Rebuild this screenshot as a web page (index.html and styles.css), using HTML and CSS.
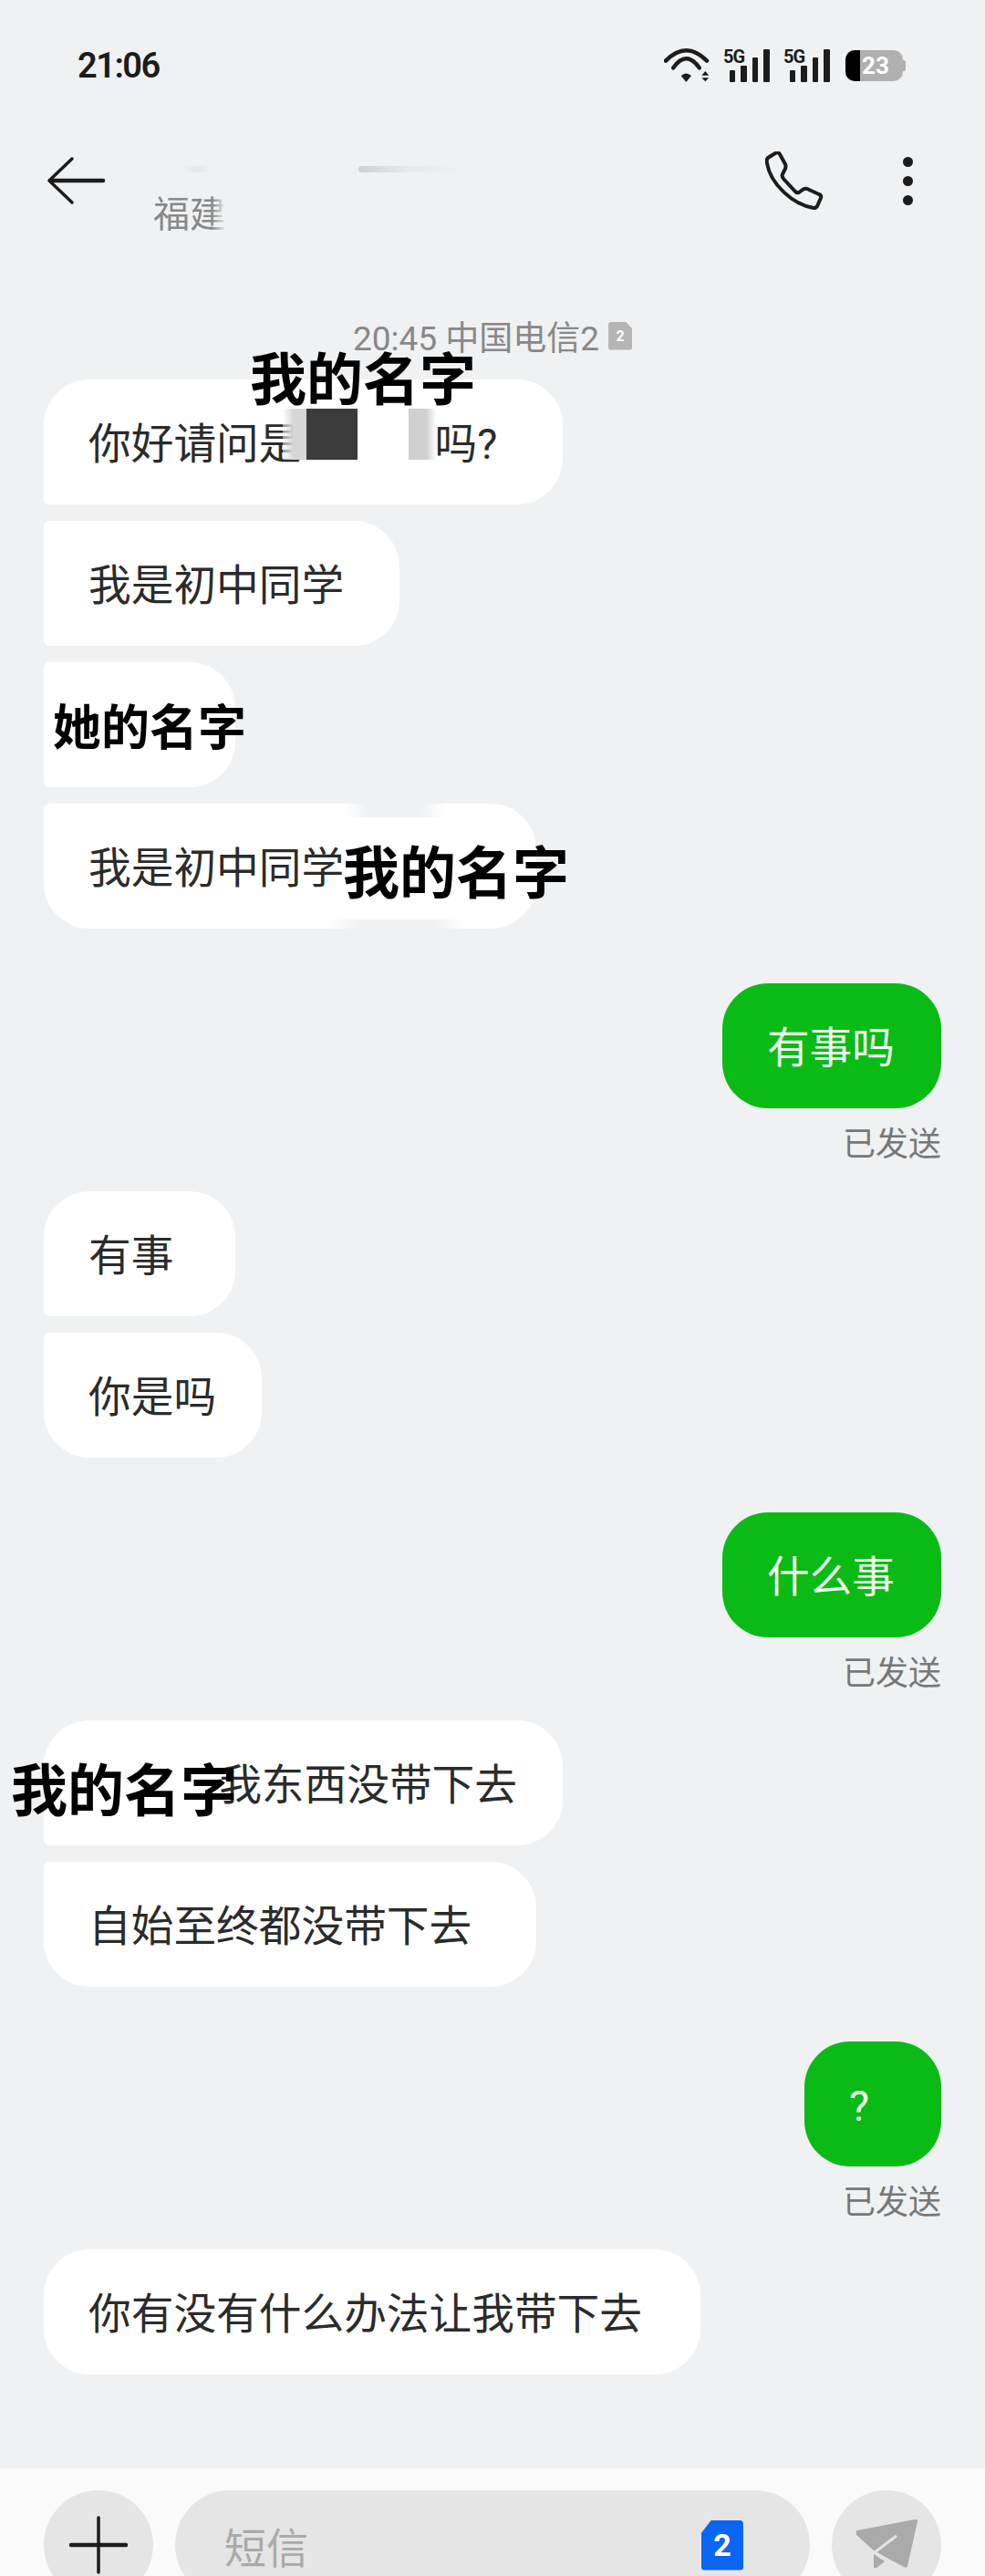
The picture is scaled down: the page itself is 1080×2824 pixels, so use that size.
FILE: index.html
```html
<!DOCTYPE html>
<html lang="zh-CN">
<head>
    <meta charset="UTF-8">
    <meta name="viewport" content="width=device-width, initial-scale=1.0">
    <title>短信</title>
    <link rel="stylesheet" href="styles.css">
</head>
<body>
    <div class="app">
        <div class="status-bar">
            <div class="time">21:06</div>
            <div class="status-icons">
                <svg class="wifi" width="51" height="42" viewBox="0 0 51 42">
                    <path d="M2 15.7 Q24.5 -7 47 15.7" fill="none" stroke="#1c1c1c" stroke-width="4.5" stroke-linecap="round"/>
                    <path d="M10.3 23.3 Q24.5 3.3 38.7 23.3" fill="none" stroke="#1c1c1c" stroke-width="4.5" stroke-linecap="round"/>
                    <path d="M18.7 32 Q24.3 27 30 32 L24.3 39 Z" fill="#1c1c1c"/>
                    <path d="M41.3 31.7 H49.3 L45.3 27 Z M41.3 34.3 H49.3 L45.3 38.3 Z" fill="#1c1c1c"/>
                </svg>
                <svg class="signal" width="52" height="40" viewBox="0 -4 52 40">
                    <text class="net-label" x="0" y="15">5G</text>
                    <rect x="7" y="23" width="6" height="13" rx="1" fill="#1c1c1c"/>
                    <rect x="19" y="18" width="7" height="18" rx="1" fill="#1c1c1c"/>
                    <rect x="32" y="9" width="6" height="27" rx="1" fill="#1c1c1c"/>
                    <rect x="44" y="0" width="7" height="36" rx="1" fill="#1c1c1c"/>
                </svg>
                <svg class="signal" width="52" height="40" viewBox="0 -4 52 40">
                    <text class="net-label" x="0" y="15">5G</text>
                    <rect x="7" y="23" width="6" height="13" rx="1" fill="#1c1c1c"/>
                    <rect x="19" y="18" width="7" height="18" rx="1" fill="#1c1c1c"/>
                    <rect x="32" y="9" width="6" height="27" rx="1" fill="#1c1c1c"/>
                    <rect x="44" y="0" width="7" height="36" rx="1" fill="#1c1c1c"/>
                </svg>
                <div class="battery">
                    <div class="battery-level"></div>
                    <div class="battery-rest">23</div>
                    <div class="battery-nub"></div>
                </div>
            </div>
        </div>

        <div class="header">
            <svg class="back" width="66" height="54" viewBox="0 0 66 54">
                <path d="M28 3 L3 27 L28 51" fill="none" stroke="#1c1c1c" stroke-width="3.5" stroke-linecap="round" stroke-linejoin="round"/>
                <path d="M4 27 H62" fill="none" stroke="#1c1c1c" stroke-width="4.5" stroke-linecap="round"/>
            </svg>
            <div class="title">
                <div class="name">
                    <span class="smudge smudge-a"></span>
                    <span class="smudge smudge-b"></span>
                </div>
                <div class="region">福建</div>
            </div>
            <svg class="phone" width="64" height="64" viewBox="0 0 64 64">
                <path d="M3 7 Q1 9 2 13 C6 36 30 58 53 62 Q56 62 57 60 L61 51 Q62 48 59 47 L46 41 Q43 40 41 42 L37 45 Q35 46 33 44 L20 30 Q18 27 19 25 L22 19 Q23 16 22 14 L16 3 Q14 0 11 2 Z" fill="none" stroke="#1c1c1c" stroke-width="4" stroke-linejoin="round"/>
            </svg>
            <div class="more">
                <span></span>
                <span></span>
                <span></span>
            </div>
        </div>

        <div class="chat">
            <div class="timestamp">
                <span>20:45 中国电信2</span>
                <span class="sim-small">2</span>
            </div>

            <div class="group">
                <div class="bubble in w-569">
                    你好请问是<span class="gap"></span>吗?
                    <div class="redact">
                        <span class="redact-fade"></span>
                        <span class="redact-dark"></span>
                        <span class="redact-space"></span>
                        <span class="redact-grey"></span>
                    </div>
                    <div class="label label-first">我的名字</div>
                </div>
                <div class="bubble in w-390">我是初中同学</div>
                <div class="bubble in w-210">
                    <div class="label label-small">她的名字</div>
                </div>
                <div class="bubble in w-540">
                    我是初中同学
                    <span class="erase erase-top"></span>
                    <span class="erase erase-bottom"></span>
                    <div class="label label-second">我的名字</div>
                </div>
            </div>

            <div class="sent">
                <div class="bubble out">有事吗</div>
                <div class="sent-state">已发送</div>
            </div>

            <div class="group">
                <div class="bubble in w-210">有事</div>
                <div class="bubble in">你是吗</div>
            </div>

            <div class="sent">
                <div class="bubble out">什么事</div>
                <div class="sent-state">已发送</div>
            </div>

            <div class="group">
                <div class="bubble in w-569 text-end">
                    我东西没带下去
                    <div class="label label-third">我的名字</div>
                </div>
                <div class="bubble in w-540">自始至终都没带下去</div>
            </div>

            <div class="sent">
                <div class="bubble out">?</div>
                <div class="sent-state">已发送</div>
            </div>

            <div class="group">
                <div class="bubble in w-720">你有没有什么办法让我带下去</div>
            </div>
        </div>

        <div class="footer">
            <div class="round-btn">
                <svg width="64" height="64" viewBox="0 0 64 64">
                    <path d="M32 2 V62" stroke="#1c1c1c" stroke-width="3.5" stroke-linecap="round"/>
                    <path d="M2 32 H62" stroke="#1c1c1c" stroke-width="4.5" stroke-linecap="round"/>
                </svg>
            </div>
            <div class="input">
                <span class="placeholder">短信</span>
                <span class="sim-big">2</span>
            </div>
            <div class="round-btn">
                <svg class="send" width="95" height="74" viewBox="0 0 95 74">
                    <path d="M15 24 L78 12 Q81 11 81 14 L70 63 Q69 66 66 64 L34 47 L14 29 Q13 25 15 24 Z" fill="#aaaaaa"/>
                    <path d="M33 50 L45 58 L36 65 Q33 66 33 63 Z" fill="#aaaaaa"/>
                    <path d="M58 30 L34 48 L62 66" fill="none" stroke="#e5e5e5" stroke-width="3"/>
                </svg>
            </div>
        </div>
    </div>
</body>
</html>
```

FILE: styles.css
```css
* {
    box-sizing: border-box;
}

body {
    margin: 0;
    background-color: #eff1f3;
    font-family: Roboto, 'Noto Sans CJK SC', sans-serif;
    color: #2b2b2b;
}

.app {
    display: flex;
    flex-direction: column;
    width: 1080px;
    height: 2824px;
    overflow: hidden;
}

/* status bar */
.status-bar {
    display: flex;
    justify-content: space-between;
    align-items: center;
    height: 108px;
    padding: 50px 87px 14px 85px;
}

.time {
    font-size: 38px;
    font-weight: 600;
    letter-spacing: -1.5px;
    color: #1c1c1c;
}

.status-icons {
    display: flex;
    align-items: center;
    gap: 14px;
}

.signal {
    margin-bottom: 4px;
}

.net-label {
    font-family: Roboto, sans-serif;
    font-size: 20px;
    font-weight: 700;
    letter-spacing: -1px;
    fill: #1c1c1c;
}

.battery {
    display: flex;
    align-items: center;
    height: 34px;
    margin-left: 2px;
}

.battery-level {
    width: 16px;
    height: 34px;
    background-color: #000;
    border-radius: 10px 0 0 10px;
}

.battery-rest {
    width: 47px;
    height: 34px;
    padding-left: 2px;
    background-color: #b0b0b0;
    border-radius: 0 10px 10px 0;
    color: #fff;
    font-size: 26px;
    font-weight: 700;
    line-height: 34px;
}

.battery-nub {
    width: 3px;
    height: 12px;
    background-color: #b0b0b0;
    border-radius: 0 2px 2px 0;
}

/* header */
.header {
    display: flex;
    align-items: center;
    flex-shrink: 0;
    height: 180px;
    padding: 0 79px 0 51px;
}

.title {
    margin-left: 51px;
}

.name {
    position: relative;
    height: 76px;
}

.smudge {
    position: absolute;
    top: 44px;
    height: 7px;
    border-radius: 4px;
}

.smudge-a {
    left: 32px;
    width: 32px;
    background: linear-gradient(90deg, transparent, #e6e7e9, transparent);
}

.smudge-b {
    left: 225px;
    width: 115px;
    background: linear-gradient(90deg, #cfd0d2, #e9eaec 50%, transparent);
}

.region {
    width: 80px;
    font-size: 40px;
    line-height: 44px;
    color: #888;
    -webkit-mask-image: linear-gradient(90deg, #000 80%, transparent);
    mask-image: linear-gradient(90deg, #000 80%, transparent);
}

.phone {
    margin-left: auto;
}

.more {
    display: flex;
    flex-direction: column;
    gap: 10px;
    margin-left: 87px;
}

.more span {
    width: 11px;
    height: 11px;
    background-color: #1c1c1c;
    border-radius: 50%;
}

/* messages */
.chat {
    flex: 1;
    padding: 58px 48px 0;
}

.timestamp {
    display: flex;
    justify-content: center;
    align-items: center;
    gap: 10px;
    height: 44px;
    margin-bottom: 26px;
    font-size: 37px;
    color: #888;
}

.sim-small {
    width: 26px;
    height: 31px;
    background-color: #b5b5b5;
    border-radius: 3px;
    clip-path: polygon(0 0, 72% 0, 100% 24%, 100% 100%, 0 100%);
    color: #fff;
    font-size: 16px;
    font-weight: 700;
    line-height: 31px;
    text-align: center;
}

.group {
    display: flex;
    flex-direction: column;
    align-items: flex-start;
    gap: 18px;
}

.bubble {
    position: relative;
    min-width: 150px;
    height: 137px;
    padding: 43px 50px 37px 49px;
    font-size: 46.7px;
    line-height: 57px;
    white-space: nowrap;
    border-radius: 50px;
}

.bubble.in {
    background-color: #fff;
}

.bubble.in:not(:first-child) {
    border-top-left-radius: 6px;
}

.bubble.in:not(:last-child) {
    border-bottom-left-radius: 6px;
}

.bubble.out {
    padding-right: 51px;
    background-color: #0abb15;
    color: #eefaee;
}

.w-210 {
    width: 210px;
}

.w-390 {
    width: 390px;
}

.w-540 {
    width: 540px;
}

.w-569 {
    width: 569px;
}

.w-720 {
    width: 720px;
}

.text-end {
    text-align: right;
}

.sent {
    display: flex;
    flex-direction: column;
    align-items: flex-end;
    margin: 60px 0 23px;
}

.sent-state {
    margin-top: 12px;
    font-size: 36px;
    line-height: 56px;
    color: #777;
}

/* pasted names and scribbles over the conversation */
.label {
    position: absolute;
    font-size: 62px;
    font-weight: 700;
    line-height: 62px;
    color: #000;
}

.label-first {
    top: -29px;
    left: 226px;
}

.label-second {
    top: 47px;
    left: 328px;
}

.label-small {
    top: 47px;
    left: 10px;
    font-size: 53px;
    line-height: 53px;
}

.label-third {
    top: 48px;
    left: -36px;
    text-align: left;
}

.gap {
    display: inline-block;
    width: 146px;
}

.redact {
    position: absolute;
    top: 32px;
    left: 262px;
    display: flex;
    height: 56px;
}

.redact-fade {
    width: 26px;
    background: linear-gradient(90deg, rgba(255, 255, 255, 0.5), #d6d6d6 45%);
}

.redact-dark {
    width: 56px;
    background-color: #3c3c3c;
}

.redact-space {
    width: 56px;
    background-color: #fff;
}

.redact-grey {
    width: 30px;
    background: linear-gradient(90deg, #d0d0d0 65%, transparent);
}

.erase {
    position: absolute;
    background: linear-gradient(90deg, transparent, #eff1f3 25%, #eff1f3 75%, transparent);
}

.erase-top {
    top: 0;
    left: 330px;
    width: 110px;
    height: 15px;
}

.erase-bottom {
    bottom: 0;
    left: 310px;
    width: 155px;
    height: 10px;
}

/* input bar */
.footer {
    display: flex;
    flex-shrink: 0;
    gap: 24px;
    height: 118px;
    padding: 24px 48px 0;
    background-color: #fafafa;
}

.round-btn {
    display: flex;
    justify-content: center;
    align-items: center;
    flex-shrink: 0;
    width: 120px;
    height: 120px;
    background-color: #e5e5e5;
    border-radius: 50%;
}

.send {
    margin-bottom: 6px;
}

.input {
    display: flex;
    justify-content: space-between;
    align-items: center;
    flex: 1;
    height: 120px;
    padding: 0 73px 0 54px;
    background-color: #e5e5e5;
    border-radius: 60px;
}

.placeholder {
    font-size: 46px;
    color: #aaa;
}

.sim-big {
    width: 46px;
    height: 55px;
    background-color: #0a66f0;
    border-radius: 4px;
    clip-path: polygon(24% 0, 100% 0, 100% 100%, 0 100%, 0 26%);
    color: #fff;
    font-size: 34px;
    font-weight: 700;
    line-height: 55px;
    text-align: center;
}
```
